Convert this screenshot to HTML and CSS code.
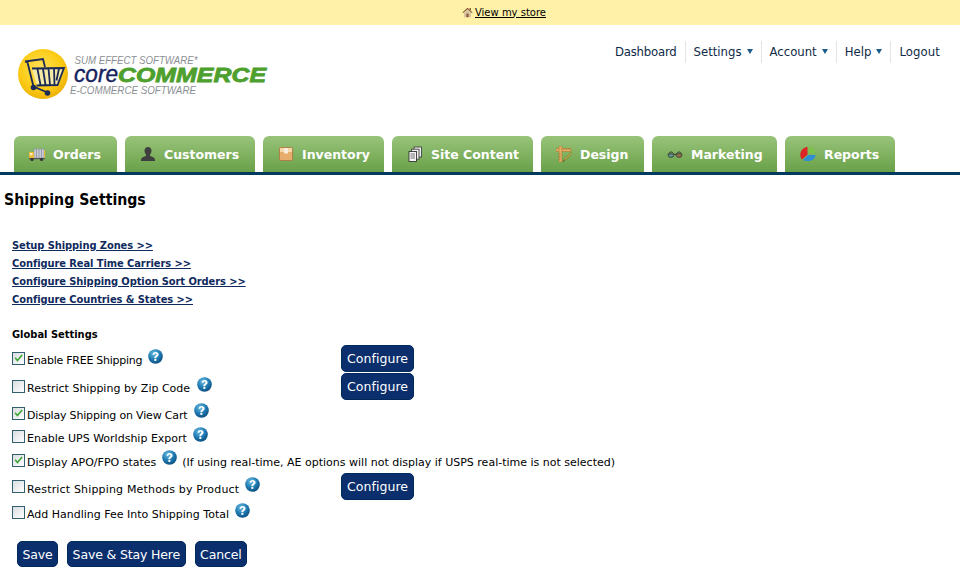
FILE: index.html
```html
<!DOCTYPE html>
<html lang="en">
<head>
<meta charset="utf-8">
<title>Shipping Settings</title>
<link rel="stylesheet" href="styles.css">
</head>
<body>
<svg class="defs" width="0" height="0" aria-hidden="true">
  <defs>
    <radialGradient id="hg" cx="40%" cy="30%" r="75%"><stop offset="0" stop-color="#6cbde2"/><stop offset="0.55" stop-color="#1f7ab2"/><stop offset="1" stop-color="#0c4a7a"/></radialGradient>
    <symbol id="help" viewBox="0 0 16 16">
      <circle cx="8" cy="8" r="7.800" fill="url(#hg)"/>
      <path d="M4.900 6.200C5 4.300 6.400 3.200 8.100 3.200c1.900 0 3.200 1.100 3.200 2.700 0 1.300-.8 1.900-1.500 2.400-.6.400-.9.800-.9 1.500H6.800c0-1.300.4-1.900 1.200-2.500.6-.4 1-.8 1-1.400 0-.7-.4-1.100-1-1.100-.7 0-1.100.5-1.200 1.300z" fill="#fff"/>
      <rect x="6.800" y="10.600" width="2.100" height="2.100" fill="#fff"/>
    </symbol>
    <symbol id="tick" viewBox="0 0 13 13">
      <path d="M2.500 6.200l1.200-1 1.800 2 4-4.600 1.200 1-5.200 6.200z" fill="#3fa535"/>
    </symbol>
  </defs>
</svg>

<div class="topbar">
  <svg class="home" viewBox="0 0 11 11" width="11" height="11" aria-hidden="true"><path d="M5.500 .8L.4 5.400l.7.700 4.400-3.900 4.400 3.900.7-.7z" fill="#7a4a28"/><path d="M2 5.600L5.500 2.600 9 5.600v4.600H2z" fill="#d9c3a0"/><rect x="4.400" y="6.600" width="2.200" height="3.600" fill="#8a5a34"/><rect x="7.600" y="1" width="1.200" height="2.400" fill="#7a4a28"/></svg>
  <a href="#">View my store</a>
</div>

<header class="header">
  <svg class="logo" viewBox="0 0 260 60" width="260" height="60" role="img" aria-label="coreCOMMERCE">
    <defs>
      <radialGradient id="ball" cx="45%" cy="40%" r="60%"><stop offset="0" stop-color="#ffe25a"/><stop offset="0.7" stop-color="#fbcb14"/><stop offset="1" stop-color="#eeb208"/></radialGradient>
    </defs>
    <circle cx="25" cy="25" r="25" fill="url(#ball)"/>
    <path d="M14 19.500L46 19 39.500 36 19 36.500z" fill="#f3eba6"/>
    <path d="M7 12.500L25 10l2 8M7 12.500l2.500 1 6 24 14 6M14 19.500L46 19 39.500 36 18.500 36.500M19.500 20l3 16M25 20l2.500 16M30.500 19.500l1.500 16.500M36 19.500l.5 16.500M41 19.500l-2.500 12" fill="none" stroke="#1c2a58" stroke-width="1.800"/>
    <circle cx="15.500" cy="38.500" r="2.800" fill="#1c2a58"/><circle cx="29.500" cy="44" r="2.800" fill="#1c2a58"/>
    <text class="logo-sub" x="56.500" y="15" textLength="123" lengthAdjust="spacingAndGlyphs">SUM EFFECT SOFTWARE*</text>
    <text class="logo-core" x="56" y="33" textLength="44" lengthAdjust="spacingAndGlyphs">core</text>
    <text class="logo-commerce" x="100" y="33" textLength="148" lengthAdjust="spacingAndGlyphs">COMMERCE</text>
    <text class="logo-sub" x="52" y="45" textLength="126" lengthAdjust="spacingAndGlyphs">E-COMMERCE SOFTWARE</text>
  </svg>
  <nav class="usernav">
    <a href="#">Dashboard</a>
    <a href="#">Settings<i class="caret"></i></a>
    <a href="#">Account<i class="caret"></i></a>
    <a href="#">Help<i class="caret"></i></a>
    <a href="#">Logout</a>
  </nav>
</header>

<nav class="tabs">
  <a class="tab" href="#"><svg viewBox="0 0 16 16" width="16" height="16"><rect x="5" y="3" width="10" height="9" fill="#c9ccd6" stroke="#8a8f9c" stroke-width=".6"/><path d="M7.500 3v9M10 3v9M12.500 3v9" stroke="#8a8f9c" stroke-width=".8"/><path d="M0 6h5v6.500H0z" fill="#e8b93a"/><rect x="1" y="7" width="2.500" height="2.200" fill="#f7f0c8"/><rect x="15" y="4" width="1" height="8" fill="#e8b93a"/><rect x="0" y="12" width="16" height="1.200" fill="#555"/><circle cx="3" cy="13.500" r="1.600" fill="#333"/><circle cx="12.500" cy="13.500" r="1.600" fill="#333"/></svg>Orders</a>
  <a class="tab" href="#"><svg viewBox="0 0 16 16" width="16" height="16"><path d="M8 1c2.300 0 3.500 1.800 3.500 3.800 0 1.700-.8 3-1.500 3.700v1.400c2 .7 5 1.500 5 4.100v1H1v-1c0-2.600 3-3.400 5-4.100V8.500C5.300 7.800 4.500 6.500 4.500 4.800 4.500 2.800 5.700 1 8 1z" fill="#3f3f3f"/></svg>Customers</a>
  <a class="tab" href="#"><svg viewBox="0 0 16 16" width="16" height="16"><rect x="1.500" y="1.500" width="13" height="13" rx="1" fill="#e6ad6c" stroke="#a9743f" stroke-width=".8"/><rect x="2" y="2" width="12" height="4" fill="#f6d7a8"/><rect x="6" y="2" width="4" height="5.500" fill="#fbeedd"/></svg>Inventory</a>
  <a class="tab" href="#"><svg viewBox="0 0 16 16" width="16" height="16"><rect x="7" y="1" width="7.500" height="10" fill="#eee" stroke="#444" stroke-width=".9"/><rect x="4.500" y="3.200" width="7.500" height="10" fill="#eee" stroke="#444" stroke-width=".9"/><rect x="2" y="5.500" width="7.500" height="10" fill="#f4f4f4" stroke="#333" stroke-width=".9"/><path d="M3.500 8h4.500M3.500 10h4.500M3.500 12h4.500" stroke="#666" stroke-width=".9"/></svg>Site Content</a>
  <a class="tab" href="#"><svg viewBox="0 0 16 16" width="16" height="16"><path d="M0 2.500h15v3H0z" fill="#e4ad66" stroke="#a8702c" stroke-width=".5"/><path d="M3 0h3v16H3z" fill="#e4ad66" stroke="#a8702c" stroke-width=".5"/><path d="M8 2.500v1.500M10.500 2.500v1.500M13 2.500v1.500M3 8h1.500M3 10.500h1.500M3 13h1.500" stroke="#8a5a20" stroke-width=".6"/><path d="M15 6.500L8.500 13l-1.500 2.500 2.500-1.500L16 7.500z" fill="#f2d24a" stroke="#4a4320" stroke-width=".6"/></svg>Design</a>
  <a class="tab" href="#"><svg viewBox="0 0 16 16" width="16" height="16"><path d="M1 8.500c.5-1.500 2-2.500 3-2.500s2.500 1 3 2.500M9 8.500c.5-1.500 2-2.500 3-2.500s2.500 1 3 2.500M7 8.500c.6-.4 1.400-.4 2 0" fill="none" stroke="#2c2c2c" stroke-width=".9"/><ellipse cx="4" cy="9.500" rx="2.800" ry="1.800" fill="#5f9a92" stroke="#2c2c2c" stroke-width=".8"/><ellipse cx="12" cy="9.500" rx="2.800" ry="1.800" fill="#a5744a" stroke="#2c2c2c" stroke-width=".8"/></svg>Marketing</a>
  <a class="tab" href="#"><svg viewBox="0 0 16 16" width="16" height="16"><path d="M7.500 1v7.500L2 13.500C.3 11.500-.2 8.500.8 6 1.800 3.500 4.500 1 7.500 1z" fill="#dc2426"/><path d="M8.500 .5c3.800 0 6.500 2.800 7 6.800h-7z" fill="#7ec24a"/><path d="M3 14l5-5h7.500c-.3 3.500-3 6-7.500 6-2 0-3.800-.3-5-1z" fill="#2f8fd2"/></svg>Reports</a>
</nav>

<main class="content">
  <h1 class="title">Shipping Settings</h1>
  <ul class="links">
    <li><a href="#">Setup Shipping Zones &gt;&gt;</a></li>
    <li><a href="#">Configure Real Time Carriers &gt;&gt;</a></li>
    <li><a href="#">Configure Shipping Option Sort Orders &gt;&gt;</a></li>
    <li><a href="#">Configure Countries &amp; States &gt;&gt;</a></li>
  </ul>
  <h2 class="section">Global Settings</h2>
  <div class="settings">
    <div class="row r1"><label class="opt"><span class="cb"><svg width="13" height="13"><use href="#tick"/></svg></span><span class="lbl tight-a">Enable FREE Shipping</span></label><svg class="help"><use href="#help"/></svg></div>
    <div class="cell c1"><button class="btn" type="button">Configure</button></div>
    <div class="row r2"><label class="opt"><span class="cb"></span><span class="lbl">Restrict Shipping by Zip Code</span></label><svg class="help far"><use href="#help"/></svg></div>
    <div class="cell c2"><button class="btn" type="button">Configure</button></div>
    <div class="row r3"><label class="opt"><span class="cb"><svg width="13" height="13"><use href="#tick"/></svg></span><span class="lbl tight-b">Display Shipping on View Cart</span></label><svg class="help high far"><use href="#help"/></svg></div>
    <div class="row r4"><label class="opt"><span class="cb"></span><span class="lbl">Enable UPS Worldship Export</span></label><svg class="help"><use href="#help"/></svg></div>
    <div class="row r5 full"><label class="opt"><span class="cb"><svg width="13" height="13"><use href="#tick"/></svg></span><span class="lbl">Display APO/FPO states</span></label><svg class="help high"><use href="#help"/></svg><span class="lbl note">(If using real-time, AE options will not display if USPS real-time is not selected)</span></div>
    <div class="row r6"><label class="opt"><span class="cb"></span><span class="lbl loose low">Restrict Shipping Methods by Product</span></label><svg class="help"><use href="#help"/></svg></div>
    <div class="cell c6"><button class="btn" type="button">Configure</button></div>
    <div class="row r7"><label class="opt"><span class="cb"></span><span class="lbl">Add Handling Fee Into Shipping Total</span></label><svg class="help"><use href="#help"/></svg></div>
  </div>
  <div class="actions">
    <button class="btn" type="button">Save</button>
    <button class="btn" type="button">Save &amp; Stay Here</button>
    <button class="btn" type="button">Cancel</button>
  </div>
</main>
</body>
</html>
```
FILE: styles.css
```css
* { box-sizing: border-box; }
html, body { margin: 0; padding: 0; }
body { width: 960px; height: 576px; overflow: hidden; background: #fff; color: #000; font-family: "DejaVu Sans", sans-serif; font-size: 11px; }
.defs { position: absolute; }
a { color: inherit; }

.topbar { height: 25px; padding: 0 0 1px 48px; background: #fff2a8; display: flex; justify-content: center; align-items: center; gap: 2px; font-size: 10px; }
.topbar a { color: #000; }
.home { flex: none; }

.header { height: 111px; padding: 24px 20px 0 18px; display: flex; justify-content: space-between; align-items: flex-start; }
.logo { flex: none; }
.logo-sub { font: italic 10px "Liberation Sans", sans-serif; fill: #8b8f93; }
.logo-core { font: italic 23px "Liberation Sans", sans-serif; fill: #16235e; stroke: #16235e; stroke-width: .4px; }
.logo-commerce { font: italic bold 20px "Liberation Sans", sans-serif; fill: #4ea02e; stroke: #4ea02e; stroke-width: .8px; }

.usernav { display: flex; font-size: 11.700px; color: #0f2a48; margin-top: -8px; }
.usernav a { text-decoration: none; padding: 3px 8px; border-left: 1px solid #e4e4e4; line-height: 16px; }
.usernav a:first-child { border-left: 0; letter-spacing: -.2px; }
.usernav a:last-child { padding-right: 0; letter-spacing: .1px; }
.caret { display: inline-block; margin-left: 5px; border: 3px solid transparent; border-top: 5px solid #1b5c8c; border-bottom: 0; vertical-align: 2px; }

.tabs { height: 39px; padding-left: 14px; display: grid; grid-template-columns: 103px 130px 121px 141px 103px 125px 110px; justify-content: start; gap: 8px; border-bottom: 3px solid #003a5c; }
.tab { height: 36px; padding-left: 15px; display: flex; align-items: center; gap: 8px; color: #fff; font-weight: bold; font-size: 12.500px; text-decoration: none; border-radius: 6px 6px 0 0; background: linear-gradient(#98c47a, #69a048); }
.tab svg { flex: none; }

.content { padding: 0 0 0 4px; }
.title { margin: 14px 0 0; font-family: "DejaVu Sans Condensed", "DejaVu Sans", sans-serif; font-size: 15.700px; line-height: 22px; font-weight: bold; }
.links { list-style: none; margin: 26px 0 0 8px; padding: 0; font-family: "DejaVu Sans Condensed", "DejaVu Sans", sans-serif; font-weight: bold; letter-spacing: -.07px; color: #0f2a5c; }
.links li { height: 18px; line-height: 18px; }
.links a { text-decoration: underline; }
.section { margin: 18px 0 0 8px; font-family: "DejaVu Sans Condensed", "DejaVu Sans", sans-serif; font-size: 11px; line-height: 16px; font-weight: bold; }

.settings { margin: 2px 0 0 8px; display: grid; grid-template-columns: 329px 1fr; grid-template-rows: 28px 27px 23px 24px 26px 26px 25px; }
.row { display: flex; align-items: flex-start; padding-top: 7px; grid-column: 1; }
.full { grid-column: 1 / 3; }
.r1 { grid-row: 1; } .r2 { grid-row: 2; } .r3 { grid-row: 3; } .r4 { grid-row: 4; } .r5 { grid-row: 5; } .r6 { grid-row: 6; } .r7 { grid-row: 7; }
.cell { grid-column: 2; align-self: start; }
.c1 { grid-row: 1; } .c2 { grid-row: 2; } .c6 { grid-row: 6; }
.opt { display: flex; align-items: flex-start; white-space: nowrap; }
.lbl { line-height: 13px; padding-top: 2px; margin-left: 1px; white-space: nowrap; }
.tight-a { letter-spacing: -.25px; }
.tight-b { letter-spacing: -.18px; }
.loose { letter-spacing: .17px; }
.low { padding-top: 3px; }
.cb { flex: none; width: 13px; height: 13px; margin-right: 1px; border: 1px solid #33606e; background: linear-gradient(135deg, #d8dde0, #fff); display: block; position: relative; }
.cb svg { position: absolute; left: -1px; top: -1px; display: block; }
.help { flex: none; width: 15px; height: 15px; margin: -3px 0 0 6px; }
.help.far { margin-left: 7px; }
.help.high { margin-top: -4px; }
.note { margin-left: 5px; }

.btn { height: 27px; padding: 0 5px; border: 1px solid #002a5c; border-radius: 5px; background: #0b2f6c; color: #fff; font-family: inherit; font-size: 12.500px; letter-spacing: .05px; cursor: pointer; }
.actions { margin: 17px 0 0 13px; display: flex; gap: 9px; }
.actions .btn { height: 26px; padding: 0 4.500px; letter-spacing: -.15px; }
```
